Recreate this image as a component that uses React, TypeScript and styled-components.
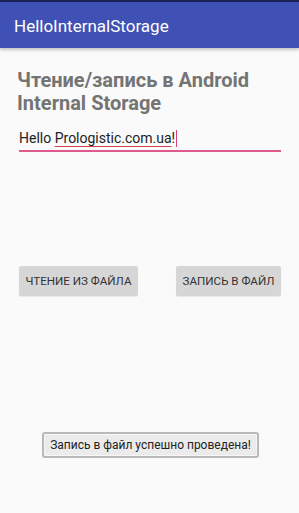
import React from 'react';
import styled, { createGlobalStyle } from 'styled-components';

const GlobalStyle = createGlobalStyle`
  html, body {
    margin: 0;
    padding: 0;
    background: #fafafa;
  }
  body {
    font-family: Roboto, "Noto Sans", sans-serif;
  }
  *, *::before, *::after {
    box-sizing: border-box;
  }
`;

const Screen = styled.div`
  position: relative;
  width: 299px;
  height: 513px;
  background: #fafafa;
  display: flex;
  flex-direction: column;
  overflow: hidden;
`;

const StatusBar = styled.div`
  height: 2px;
  background: #1c2359;
`;

const AppBar = styled.header`
  height: 46px;
  background: #3f51b5;
  display: flex;
  align-items: center;
  padding-left: 14px;
  box-shadow: 0 2px 3px rgba(0, 0, 0, 0.22);
  position: relative;
  z-index: 1;
`;

const AppTitle = styled.h1`
  margin: 0;
  font-size: 17px;
  font-weight: 400;
  color: #ffffff;
  padding-top: 1px;
`;

const Content = styled.main`
  display: flex;
  flex-direction: column;
  padding: 21px 18px 0 17px;
`;

const Heading = styled.h2`
  margin: 0;
  font-size: 20px;
  line-height: 23px;
  font-weight: 700;
  color: #747474;
`;

const Field = styled.div`
  margin-top: 13px;
  margin-left: 2px;
  height: 24px;
  padding-bottom: 2px;
  border-bottom: 2px solid #de5a8c;
  font-size: 14px;
  line-height: 20px;
  color: #222;
  display: flex;
  align-items: center;
`;

const Misspelled = styled.span`
  text-decoration: underline;
  text-decoration-color: #d2404f;
  text-underline-offset: 3px;
`;

const Caret = styled.span`
  display: inline-block;
  width: 1px;
  height: 17px;
  background: #de3f78;
  margin-left: 1px;
`;

const ButtonRow = styled.div`
  margin-top: 114px;
  margin-left: 2px;
  display: flex;
  justify-content: space-between;
`;

const Button = styled.button<{ $w: number }>`
  width: ${(p) => p.$w}px;
  height: 30px;
  border: none;
  border-radius: 2px;
  background: #d6d6d6;
  color: #333;
  font-family: Roboto, "Noto Sans", sans-serif;
  font-size: 11.6px;
  padding: 0;
  text-transform: uppercase;
  box-shadow: 0 1px 1px rgba(0, 0, 0, 0.08);
`;

const Toast = styled.div`
  position: absolute;
  left: 42px;
  top: 432px;
  width: 217px;
  height: 26px;
  border: 2px solid #b9b9b9;
  border-radius: 3px;
  background: #ebebeb;
  box-shadow: inset 0 0 0 1px #f7f7f7;
  display: flex;
  align-items: center;
  justify-content: center;
  white-space: nowrap;
  font-size: 12px;
  color: #222;
`;

export default function App() {
  return (
    <>
      <GlobalStyle />
      <Screen>
        <StatusBar />
        <AppBar>
          <AppTitle>HelloInternalStorage</AppTitle>
        </AppBar>
        <Content>
          <Heading>
            Чтение/запись в Android
            <br />
            Internal Storage
          </Heading>
          <Field>
            Hello&nbsp;<Misspelled>Prologistic.com.ua</Misspelled>!
            <Caret />
          </Field>
          <ButtonRow>
            <Button $w={119}>Чтение из файла</Button>
            <Button $w={105}>Запись в файл</Button>
          </ButtonRow>
        </Content>
        <Toast>Запись в файл успешно проведена!</Toast>
      </Screen>
    </>
  );
}
